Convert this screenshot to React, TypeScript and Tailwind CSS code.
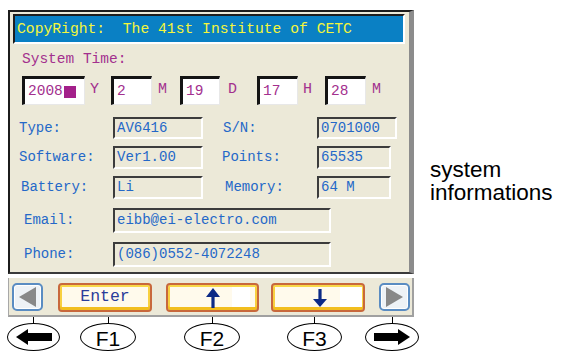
const mono = "font-['Liberation_Mono','DejaVu_Sans_Mono',monospace]";

const TimeBox = ({ value, w, cursor }: { value: string; w: string; cursor?: boolean }) => (
  <div
    className={`${w} h-[29px] bg-white border-t-[3px] border-l-[3px] border-[#141414] border-r border-b border-r-[#e8e8e8] border-b-[#e8e8e8] flex items-center pl-[3px] text-[14.5px] text-[#a3308e]`}
  >
    {value}
    {cursor && <span className="ml-[1px] inline-block w-[12px] h-[12px] bg-[#a3208a]" />}
  </div>
);

const Unit = ({ ch, w, pl }: { ch: string; w: string; pl: string }) => (
  <span className={`${w} ${pl} text-[15px] text-[#a3308e]`}>{ch}</span>
);

const Field = ({ value, w, h }: { value: string; w: string; h: string }) => (
  <div
    className={`${w} ${h} bg-[#ece9d8] border-t-2 border-l-2 border-[#3c3c3c] border-r-2 border-b-2 border-r-white border-b-white flex items-center pl-[2px] text-[14px] text-[#2468c8]`}
  >
    {value}
  </div>
);

const Label = ({ text, cls }: { text: string; cls: string }) => (
  <span className={`${cls} text-[14px] text-[#2468c8] shrink-0`}>{text}</span>
);

const YellowButton = ({ children, w, white }: { children: React.ReactNode; w: string; white?: string }) => (
  <div
    className={`${w} h-[29px] relative rounded-[4px] border-2 border-[#c8683c] bg-[#fffaec] shadow-[inset_0_2px_0_#f8d848,inset_0_-3px_0_#f2be1e,inset_2px_0_0_#f8d040,inset_-2px_0_0_#f8d040] flex items-center justify-center`}
  >
    {white && <div className={`absolute top-[2px] bottom-[3px] bg-white ${white}`} />}
    <div className="relative">{children}</div>
  </div>
);

const SideButton = ({ dir }: { dir: 'left' | 'right' }) => (
  <div className="w-[31px] h-[28px] rounded-[5px] border-2 border-[#5a8cc2] bg-[#eef2f6] shadow-[inset_0_0_0_1px_#ffffff] flex items-center justify-center">
    <svg width="17" height="20" viewBox="0 0 17 20">
      {dir === 'left' ? (
        <polygon points="17,0 17,20 0,10" fill="#888888" />
      ) : (
        <polygon points="0,0 0,20 17,10" fill="#888888" />
      )}
    </svg>
  </div>
);

const Callout = ({ ml, w, children }: { ml: string; w: string; children: React.ReactNode }) => (
  <div className={`${ml} ${w} flex flex-col items-center shrink-0`}>
    <div className="w-px h-[6px] bg-black" />
    <div className="w-full h-[28px] rounded-[50%] border border-black flex items-center justify-center pt-[3px] text-[21px] leading-none text-black font-['Liberation_Sans',Arial,sans-serif]">
      {children}
    </div>
  </div>
);

const BigArrow = ({ dir }: { dir: 'left' | 'right' }) => (
  <svg width="36" height="16" viewBox="0 0 36 16" className="-mt-[3px]">
    <polygon
      points={dir === 'left' ? '0,8 12,0 12,4 36,4 36,12 12,12 12,16' : '36,8 24,0 24,4 0,4 0,12 24,12 24,16'}
      fill="#000"
    />
  </svg>
);

export default function App() {
  return (
    <div className="w-[561px] h-[352px] bg-white flex overflow-hidden">
      <div className="w-[420px] shrink-0 pt-[10px]">
        {/* screen panel */}
        <div className={`ml-[8px] w-[406px] h-[264px] bg-[#ece9d8] border-t-2 border-l-2 border-t-[#1c1c1c] border-l-[#1c1c1c] border-r-[5px] border-r-[#8c8c8c] border-b-2 border-b-[#3a3a3a] ${mono}`}>
          <div className="ml-[3px] mt-[2px] w-[392px] h-[30px] border-t-2 border-l-2 border-[#1e1e1e] border-r-2 border-b-2 border-r-white border-b-white bg-[#0a80c4] flex items-center pl-[2px] text-[14.7px] text-[#f4f63c] whitespace-pre">
            CopyRight:  The 41st Institute of CETC
          </div>

          <div className="mt-[6px] pl-[12px] h-[18px] leading-[18px] text-[14.5px] text-[#a3308e]">System Time:</div>

          <div className="mt-[8px] pl-[12px] flex items-center">
            <TimeBox value="2008" w="w-[63px]" cursor />
            <Unit ch="Y" w="w-[26px]" pl="pl-[5px]" />
            <TimeBox value="2" w="w-[41px]" />
            <Unit ch="M" w="w-[28px]" pl="pl-[6px]" />
            <TimeBox value="19" w="w-[40px]" />
            <Unit ch="D" w="w-[37px]" pl="pl-[8px]" />
            <TimeBox value="17" w="w-[41px]" />
            <Unit ch="H" w="w-[27px]" pl="pl-[5px]" />
            <TimeBox value="28" w="w-[41px]" />
            <Unit ch="M" w="w-[26px]" pl="pl-[6px]" />
          </div>

          <div className="mt-[12px] flex items-center">
            <Label text="Type:" cls="ml-[9px] w-[94px]" />
            <Field value="AV6416" w="w-[90px]" h="h-[22px]" />
            <Label text="S/N:" cls="ml-[20px] w-[94px]" />
            <Field value="0701000" w="w-[80px]" h="h-[22px]" />
          </div>
          <div className="mt-[7px] flex items-center">
            <Label text="Software:" cls="ml-[9px] w-[94px]" />
            <Field value="Ver1.00" w="w-[90px]" h="h-[23px]" />
            <Label text="Points:" cls="ml-[19px] w-[95px]" />
            <Field value="65535" w="w-[74px]" h="h-[23px]" />
          </div>
          <div className="mt-[7px] flex items-center">
            <Label text="Battery:" cls="ml-[11px] w-[92px]" />
            <Field value="Li" w="w-[90px]" h="h-[23px]" />
            <Label text="Memory:" cls="ml-[22px] w-[92px]" />
            <Field value="64 M" w="w-[74px]" h="h-[23px]" />
          </div>
          <div className="mt-[9px] flex items-center">
            <Label text="Email:" cls="ml-[14px] w-[89px]" />
            <Field value="eibb@ei-electro.com" w="w-[218px]" h="h-[25px]" />
          </div>
          <div className="mt-[9px] flex items-center">
            <Label text="Phone:" cls="ml-[14px] w-[89px]" />
            <Field value="(086)0552-4072248" w="w-[218px]" h="h-[25px]" />
          </div>
        </div>

        {/* key bar */}
        <div className={`mt-[4px] ml-[8px] w-[406px] h-[39px] bg-[#ece9d8] border-l border-l-[#a8a8a8] border-r-2 border-r-[#a0a0a0] border-b-2 border-b-[#a0a0a0] flex items-start pt-[5px] pl-[3px] ${mono}`}>
          <SideButton dir="left" />
          <div className="ml-[15px]">
            <YellowButton w="w-[94px]">
              <span className="text-[16.5px] text-[#2a3c9a]">Enter</span>
            </YellowButton>
          </div>
          <div className="ml-[14px]">
            <YellowButton w="w-[93px]" white="left-[64px] w-[18px]">
              <svg width="14" height="20" viewBox="0 0 14 20" className="block">
                <polygon points="7,0 14,9 8.6,9 8.6,20 5.4,20 5.4,9 0,9" fill="#0c2a86" />
              </svg>
            </YellowButton>
          </div>
          <div className="ml-[12px]">
            <YellowButton w="w-[94px]" white="left-[67px] w-[22px]">
              <svg width="14" height="18" viewBox="0 0 14 18" className="block ml-[4px]">
                <polygon points="7,18 14,10 8.6,10 8.6,0 5.4,0 5.4,10 0,10" fill="#0c2a86" />
              </svg>
            </YellowButton>
          </div>
          <div className="ml-[14px]">
            <SideButton dir="right" />
          </div>
        </div>

        {/* callouts */}
        <div className="flex items-start">
          <Callout ml="ml-[7px]" w="w-[53px]">
            <BigArrow dir="left" />
          </Callout>
          <Callout ml="ml-[20px]" w="w-[56px]">F1</Callout>
          <Callout ml="ml-[48px]" w="w-[56px]">F2</Callout>
          <Callout ml="ml-[47px]" w="w-[55px]">F3</Callout>
          <Callout ml="ml-[23px]" w="w-[54px]">
            <BigArrow dir="right" />
          </Callout>
        </div>
      </div>

      <div className="pt-[158px] pl-[10px] text-[22.5px] leading-[23px] text-black font-['Liberation_Sans',Arial,sans-serif]">
        system
        <br />
        informations
      </div>
    </div>
  );
}
